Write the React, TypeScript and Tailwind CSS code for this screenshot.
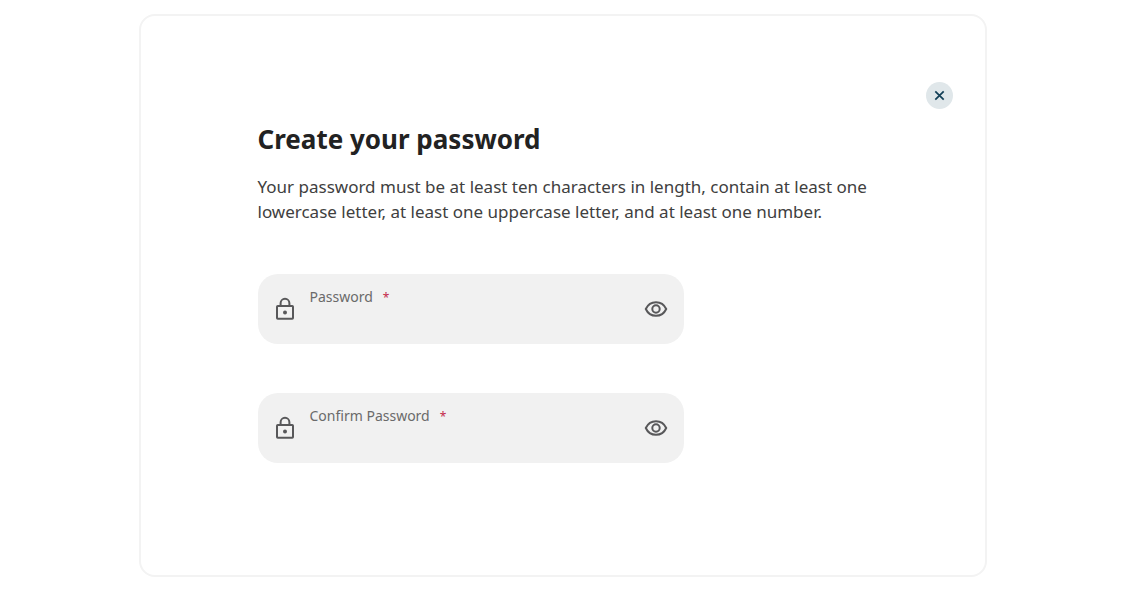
import React, { useState } from "react";

interface PasswordFieldProps {
  id: string;
  label: string;
}

const LockIcon = () => (
  <svg
    viewBox="0 0 24 24"
    className="h-6 w-6 shrink-0"
    fill="none"
    stroke="#58585a"
    strokeWidth="2"
    aria-hidden="true"
  >
    <rect x="4" y="9" width="16" height="12.8" rx="0.8" />
    <path d="M7.6 9V6.2a4.4 4.4 0 0 1 8.8 0V9" />
    <circle cx="12" cy="15.4" r="2" fill="#58585a" stroke="none" />
  </svg>
);

const EyeIcon = () => (
  <svg
    viewBox="0 0 24 24"
    className="h-6 w-6"
    fill="none"
    stroke="#58585a"
    strokeWidth="2"
    aria-hidden="true"
  >
    <path d="M1.8 12C3.8 7.6 7.6 5.2 12 5.2S20.2 7.6 22.2 12C20.2 16.4 16.4 18.8 12 18.8S3.8 16.4 1.8 12Z" />
    <circle cx="12" cy="12" r="3.7" />
  </svg>
);

const PasswordField: React.FC<PasswordFieldProps> = ({ id, label }) => {
  const [value, setValue] = useState("");
  const [isVisible, setIsVisible] = useState(false);

  return (
    <div className="flex items-center rounded-[20px] bg-[#f1f1f1] pl-[15px] pr-4">
      <LockIcon />
      <div className="ml-[13px] flex min-w-0 flex-1 flex-col py-[13px]">
        <label htmlFor={id} className="text-sm leading-5 text-[#6a6a6a]">
          {label}
          <span className="ml-2.5 text-xs text-[#c4284a]">*</span>
        </label>
        <input
          id={id}
          type={isVisible ? "text" : "password"}
          value={value}
          onChange={(e) => setValue(e.target.value)}
          required
          className="h-6 w-full bg-transparent text-base text-[#333333] outline-none"
        />
      </div>
      <button
        type="button"
        onClick={() => setIsVisible(!isVisible)}
        aria-label={isVisible ? "Hide password" : "Show password"}
      >
        <EyeIcon />
      </button>
    </div>
  );
};

const App: React.FC = () => {
  const [isOpen, setIsOpen] = useState(true);

  return (
    <main className="min-h-screen bg-white px-4 py-3.5 font-['Noto_Sans',sans-serif]">
      {isOpen && (
        <section className="mx-auto max-w-[848px] rounded-2xl border-2 border-[#f3f3f3] pb-28 pt-[66px]">
          <div className="flex justify-end pr-8">
            <button
              type="button"
              onClick={() => setIsOpen(false)}
              aria-label="Close"
              className="flex h-[27px] w-[27px] items-center justify-center rounded-full bg-[#e0e7ea]"
            >
              <svg
                viewBox="0 0 11 11"
                className="h-[11px] w-[11px]"
                stroke="#123f56"
                strokeWidth="1.7"
                aria-hidden="true"
              >
                <path d="M1.3 1.3l8.4 8.4M9.7 1.3L1.3 9.7" />
              </svg>
            </button>
          </div>

          <form
            className="mt-3.5 px-[117px]"
            onSubmit={(e) => e.preventDefault()}
          >
            <h1 className="text-[26px] font-bold leading-8 text-[#222222]">
              Create your password
            </h1>
            <p className="mt-[19px] text-[17px] leading-[25px] text-[#404040]">
              Your password must be at least ten characters in length, contain
              at least one lowercase letter, at least one uppercase letter, and
              at least one number.
            </p>
            <div className="mt-[50px] flex max-w-[426px] flex-col gap-[49px]">
              <PasswordField id="password" label="Password" />
              <PasswordField id="confirm-password" label="Confirm Password" />
            </div>
          </form>
        </section>
      )}
    </main>
  );
};

export default App;
